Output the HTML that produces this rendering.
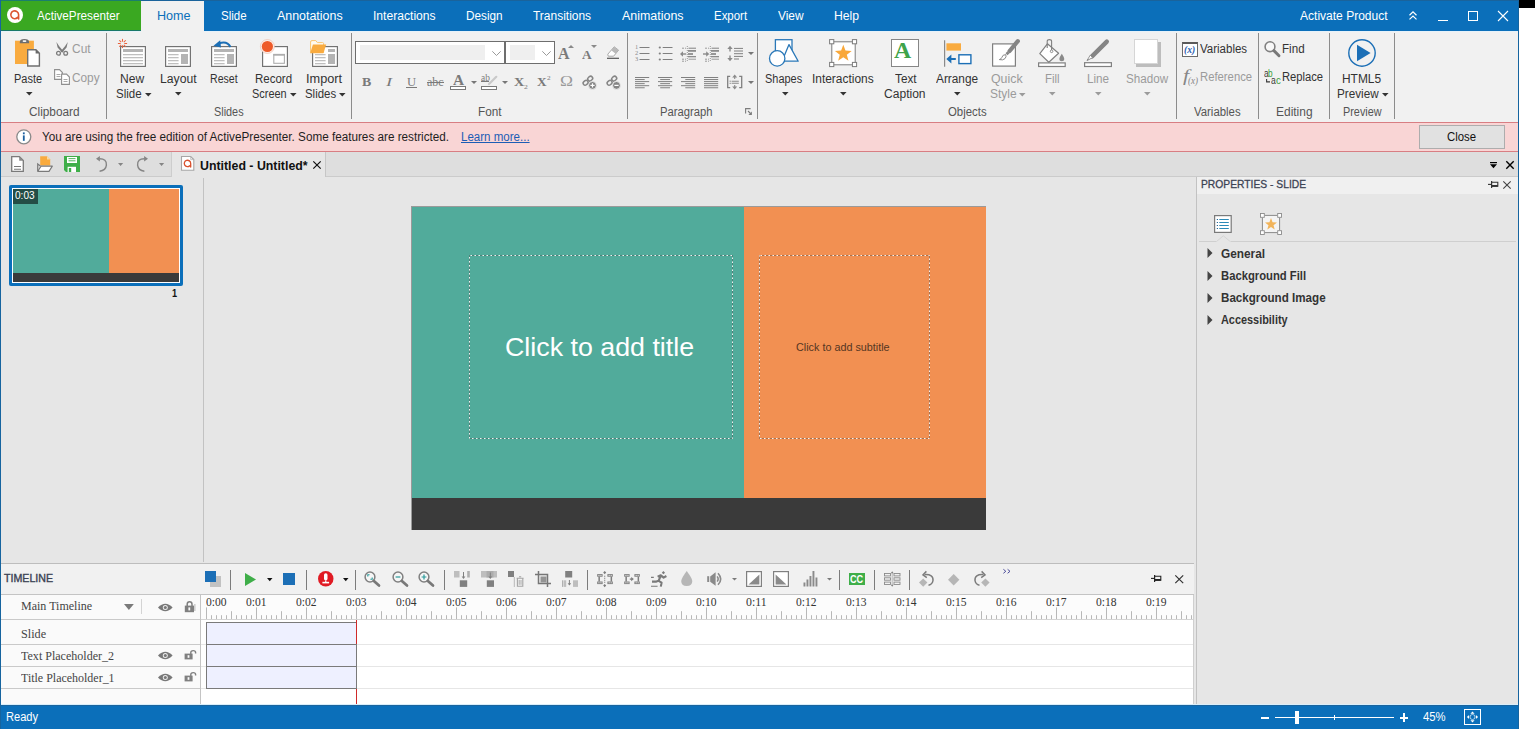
<!DOCTYPE html>
<html><head><meta charset="utf-8"><title>ActivePresenter</title><style>
*{margin:0;padding:0;box-sizing:border-box}
html,body{width:1535px;height:729px;overflow:hidden;background:#fff}
body{font-family:"Liberation Sans",sans-serif;font-size:12px;position:relative}
.r{position:absolute}
.i{position:absolute;overflow:visible}
.t{position:absolute;white-space:nowrap;line-height:1;transform-origin:0 0;display:inline-block}
.sf{font-family:"Liberation Serif",serif}
.b{font-weight:bold}
.it{font-style:italic}
</style></head><body>
<div class="r" style="left:1519px;top:0px;width:16px;height:7.7px;background:#000;"></div>
<div class="r" style="left:0px;top:0px;width:1519px;height:729px;background:#e6e6e6;"></div>
<div class="r" style="left:0px;top:0px;width:1519px;height:31px;background:#0b6fba;"></div>
<div class="r" style="left:1px;top:1px;width:140px;height:29px;background:#3aa821;"></div>
<div class="r" style="left:0px;top:0px;width:1519px;height:1px;background:#1a639b;"></div>
<div class="r" style="left:0px;top:0px;width:141px;height:1px;background:#1b7f6c;"></div>
<div class="r" style="left:1px;top:30px;width:140px;height:1px;background:#187868;"></div>
<div class="r" style="left:141px;top:1px;width:63px;height:30px;background:#f1f1f1;"></div>
<span class="t " style="font-size: 12px; color: rgb(255, 255, 255); left: 36.7px; top: 10px; transform: scaleX(0.9752);">ActivePresenter</span>
<span class="t " style="font-size: 12px; color: rgb(11, 111, 186); left: 156.7px; top: 10px; transform: scaleX(1.0495);">Home</span>
<span class="t " style="font-size: 12px; color: rgb(255, 255, 255); left: 220.7px; top: 10px; transform: scaleX(0.9593);">Slide</span>
<span class="t " style="font-size: 12px; color: rgb(255, 255, 255); left: 276.7px; top: 10px; transform: scaleX(1.0349);">Annotations</span>
<span class="t " style="font-size: 12px; color: rgb(255, 255, 255); left: 372.7px; top: 10px; transform: scaleX(1.0089);">Interactions</span>
<span class="t " style="font-size: 12px; color: rgb(255, 255, 255); left: 465.7px; top: 10px; transform: scaleX(0.9797);">Design</span>
<span class="t " style="font-size: 12px; color: rgb(255, 255, 255); left: 533.2px; top: 10px; transform: scaleX(0.9974);">Transitions</span>
<span class="t " style="font-size: 12px; color: rgb(255, 255, 255); left: 621.7px; top: 10px; transform: scaleX(1.0375);">Animations</span>
<span class="t " style="font-size: 12px; color: rgb(255, 255, 255); left: 714.2px; top: 10px; transform: scaleX(0.9542);">Export</span>
<span class="t " style="font-size: 12px; color: rgb(255, 255, 255); left: 777.7px; top: 10px; transform: scaleX(0.9924);">View</span>
<span class="t " style="font-size: 12px; color: rgb(255, 255, 255); left: 834.2px; top: 10px; transform: scaleX(1.0167);">Help</span>
<span class="t " style="font-size: 12px; color: rgb(255, 255, 255); left: 1300.2px; top: 10px; transform: scaleX(1.0026);">Activate Product</span>
<div class="r" style="left:1px;top:31px;width:1517px;height:91px;background:#f1f1f1;"></div>
<div class="r" style="left:1px;top:31px;width:140px;height:1px;background:#e6f2fa;"></div>
<div class="r" style="left:204px;top:31px;width:1313px;height:1px;background:#e6f2fa;"></div>
<div class="r" style="left:106px;top:33px;width:1px;height:86px;background:#8c8c8c;"></div>
<div class="r" style="left:351px;top:33px;width:1px;height:86px;background:#8c8c8c;"></div>
<div class="r" style="left:627px;top:33px;width:1px;height:86px;background:#8c8c8c;"></div>
<div class="r" style="left:757px;top:33px;width:1px;height:86px;background:#8c8c8c;"></div>
<div class="r" style="left:1176px;top:33px;width:1px;height:86px;background:#8c8c8c;"></div>
<div class="r" style="left:1258px;top:33px;width:1px;height:86px;background:#8c8c8c;"></div>
<div class="r" style="left:1329px;top:33px;width:1px;height:86px;background:#8c8c8c;"></div>
<div class="r" style="left:1394px;top:33px;width:1px;height:86px;background:#8c8c8c;"></div>
<span class="t " style="font-size: 12px; color: rgb(51, 51, 51); left: 14.2px; top: 73px; transform: scaleX(0.9157);">Paste</span>
<span class="t " style="font-size: 12px; color: rgb(51, 51, 51); left: 120.2px; top: 73px; transform: scaleX(1.0035);">New</span>
<span class="t " style="font-size: 12px; color: rgb(51, 51, 51); left: 115.7px; top: 88px; transform: scaleX(0.9593);">Slide</span>
<span class="t " style="font-size: 12px; color: rgb(51, 51, 51); left: 159.7px; top: 73px; transform: scaleX(1.0158);">Layout</span>
<span class="t " style="font-size: 12px; color: rgb(51, 51, 51); left: 210.2px; top: 73px; transform: scaleX(0.8801);">Reset</span>
<span class="t " style="font-size: 12px; color: rgb(51, 51, 51); left: 254.7px; top: 73px; transform: scaleX(0.959);">Record</span>
<span class="t " style="font-size: 12px; color: rgb(51, 51, 51); left: 251.7px; top: 88px; transform: scaleX(0.9098);">Screen</span>
<span class="t " style="font-size: 12px; color: rgb(51, 51, 51); left: 305.7px; top: 73px; transform: scaleX(1.0613);">Import</span>
<span class="t " style="font-size: 12px; color: rgb(51, 51, 51); left: 304.7px; top: 88px; transform: scaleX(0.9514);">Slides</span>
<span class="t " style="font-size: 12px; color: rgb(51, 51, 51); left: 765.2px; top: 73px; transform: scaleX(0.9115);">Shapes</span>
<span class="t " style="font-size: 12px; color: rgb(51, 51, 51); left: 812.2px; top: 73px; transform: scaleX(0.9928);">Interactions</span>
<span class="t " style="font-size: 12px; color: rgb(51, 51, 51); left: 894.7px; top: 73px; transform: scaleX(0.9811);">Text</span>
<span class="t " style="font-size: 12px; color: rgb(51, 51, 51); left: 884.2px; top: 88px; transform: scaleX(1.0054);">Caption</span>
<span class="t " style="font-size: 12px; color: rgb(51, 51, 51); left: 936.2px; top: 73px; transform: scaleX(0.9859);">Arrange</span>
<span class="t " style="font-size: 12px; color: rgb(155, 155, 155); left: 990.7px; top: 73px; transform: scaleX(1.0297);">Quick</span>
<span class="t " style="font-size: 12px; color: rgb(155, 155, 155); left: 990.2px; top: 88px; transform: scaleX(0.9967);">Style</span>
<span class="t " style="font-size: 12px; color: rgb(155, 155, 155); left: 1045.2px; top: 73px; transform: scaleX(0.9525);">Fill</span>
<span class="t " style="font-size: 12px; color: rgb(155, 155, 155); left: 1087.2px; top: 73px; transform: scaleX(0.9741);">Line</span>
<span class="t " style="font-size: 12px; color: rgb(155, 155, 155); left: 1126.2px; top: 73px; transform: scaleX(0.9706);">Shadow</span>
<span class="t " style="font-size: 12px; color: rgb(51, 51, 51); left: 1342.2px; top: 73px; transform: scaleX(0.9938);">HTML5</span>
<span class="t " style="font-size: 12px; color: rgb(51, 51, 51); left: 1337.2px; top: 88px; transform: scaleX(0.9745);">Preview</span>
<span class="t " style="font-size: 12px; color: rgb(155, 155, 155); left: 72.2px; top: 43px; transform: scaleX(0.9953);">Cut</span>
<span class="t " style="font-size: 12px; color: rgb(155, 155, 155); left: 72.2px; top: 71.5px; transform: scaleX(0.9852);">Copy</span>
<span class="t " style="font-size: 12px; color: rgb(51, 51, 51); left: 1200.2px; top: 43px; transform: scaleX(0.9585);">Variables</span>
<span class="t " style="font-size: 12px; color: rgb(155, 155, 155); left: 1200.2px; top: 71px; transform: scaleX(0.9409);">Reference</span>
<span class="t " style="font-size: 12px; color: rgb(51, 51, 51); left: 1282.2px; top: 43px; transform: scaleX(0.9681);">Find</span>
<span class="t " style="font-size: 12px; color: rgb(51, 51, 51); left: 1282.2px; top: 71px; transform: scaleX(0.9334);">Replace</span>
<span class="t " style="font-size: 12px; color: rgb(85, 85, 85); left: 29.2px; top: 106px; transform: scaleX(0.9849);">Clipboard</span>
<span class="t " style="font-size: 12px; color: rgb(85, 85, 85); left: 214.2px; top: 106px; transform: scaleX(0.9055);">Slides</span>
<span class="t " style="font-size: 12px; color: rgb(85, 85, 85); left: 478.2px; top: 106px; transform: scaleX(0.9827);">Font</span>
<span class="t " style="font-size: 12px; color: rgb(85, 85, 85); left: 660.2px; top: 106px; transform: scaleX(0.9385);">Paragraph</span>
<span class="t " style="font-size: 12px; color: rgb(85, 85, 85); left: 948.2px; top: 106px; transform: scaleX(0.9487);">Objects</span>
<span class="t " style="font-size: 12px; color: rgb(85, 85, 85); left: 1194.2px; top: 106px; transform: scaleX(0.9483);">Variables</span>
<span class="t " style="font-size: 12px; color: rgb(85, 85, 85); left: 1276.2px; top: 106px; transform: scaleX(0.9972);">Editing</span>
<span class="t " style="font-size: 12px; color: rgb(85, 85, 85); left: 1343.2px; top: 106px; transform: scaleX(0.9042);">Preview</span>
<svg class="i" style="left:25.7px;top:92.3px;" width="6.6" height="3.4" viewBox="0 0 6.6 3.4"><path d="M0 0H6.6L3.3 3.4Z" fill="#333333"></path></svg>
<svg class="i" style="left:144.7px;top:92.8px;" width="6.6" height="3.4" viewBox="0 0 6.6 3.4"><path d="M0 0H6.6L3.3 3.4Z" fill="#333333"></path></svg>
<svg class="i" style="left:175.2px;top:92.3px;" width="6.6" height="3.4" viewBox="0 0 6.6 3.4"><path d="M0 0H6.6L3.3 3.4Z" fill="#333333"></path></svg>
<svg class="i" style="left:290.2px;top:92.8px;" width="6.6" height="3.4" viewBox="0 0 6.6 3.4"><path d="M0 0H6.6L3.3 3.4Z" fill="#333333"></path></svg>
<svg class="i" style="left:338.7px;top:92.8px;" width="6.6" height="3.4" viewBox="0 0 6.6 3.4"><path d="M0 0H6.6L3.3 3.4Z" fill="#333333"></path></svg>
<svg class="i" style="left:781.7px;top:92.3px;" width="6.6" height="3.4" viewBox="0 0 6.6 3.4"><path d="M0 0H6.6L3.3 3.4Z" fill="#333333"></path></svg>
<svg class="i" style="left:840.2px;top:92.3px;" width="6.6" height="3.4" viewBox="0 0 6.6 3.4"><path d="M0 0H6.6L3.3 3.4Z" fill="#333333"></path></svg>
<svg class="i" style="left:954.2px;top:92.3px;" width="6.6" height="3.4" viewBox="0 0 6.6 3.4"><path d="M0 0H6.6L3.3 3.4Z" fill="#333333"></path></svg>
<svg class="i" style="left:1018.7px;top:92.8px;" width="6.6" height="3.4" viewBox="0 0 6.6 3.4"><path d="M0 0H6.6L3.3 3.4Z" fill="#9b9b9b"></path></svg>
<svg class="i" style="left:1049.2px;top:92.3px;" width="6.6" height="3.4" viewBox="0 0 6.6 3.4"><path d="M0 0H6.6L3.3 3.4Z" fill="#9b9b9b"></path></svg>
<svg class="i" style="left:1095.2px;top:92.3px;" width="6.6" height="3.4" viewBox="0 0 6.6 3.4"><path d="M0 0H6.6L3.3 3.4Z" fill="#9b9b9b"></path></svg>
<svg class="i" style="left:1144.2px;top:92.3px;" width="6.6" height="3.4" viewBox="0 0 6.6 3.4"><path d="M0 0H6.6L3.3 3.4Z" fill="#9b9b9b"></path></svg>
<svg class="i" style="left:1381.7px;top:92.8px;" width="6.6" height="3.4" viewBox="0 0 6.6 3.4"><path d="M0 0H6.6L3.3 3.4Z" fill="#333333"></path></svg>
<svg class="i" style="left:7px;top:7px;" width="16" height="16" viewBox="0 0 16 16"><circle cx="8" cy="8" r="8" fill="#fff"></circle><path d="M11.6 11.9V7.6A3.9 3.9 0 1 0 10.6 10.4" fill="none" stroke="#dc5530" stroke-width="1.6" stroke-linecap="round"></path></svg>
<svg class="i" style="left:15px;top:39px;" width="26" height="28" viewBox="0 0 26 28"><rect x="0" y="1.7" width="18.9" height="23.3" fill="#f9ab3f"></rect><path d="M4.8 4.3V3Q4.8 0.1 9.4 0.1Q14.1 0.1 14.1 3V4.3Z" fill="#6e6e6e"></path><rect x="7.7" y="1.3" width="3.6" height="1.7" rx="0.8" fill="#f4f4f4"></rect><path d="M12.7 10.7H20.9L24.4 14.2V27H12.7Z" fill="#fff" stroke="#707070" stroke-width="1.4"></path><path d="M20.6 10.2V14.6H25Z" fill="#6a6a6a"></path></svg>
<svg class="i" style="left:56px;top:42.3px;" width="12.2" height="13.8" viewBox="0 0 12.2 13.8"><path d="M0.4 0L3.2 4.2L7.6 9.4L6 10.4L1.6 5.4Z" fill="#7c7c7c"></path><path d="M11.8 0L9 4.2L4.6 9.4L6.2 10.4L10.6 5.4Z" fill="#7c7c7c"></path><circle cx="2.5" cy="11.3" r="1.9" fill="#f1f1f1" stroke="#7c7c7c" stroke-width="1.3"></circle><circle cx="9.7" cy="11.3" r="1.9" fill="#f1f1f1" stroke="#7c7c7c" stroke-width="1.3"></circle></svg>
<svg class="i" style="left:54px;top:69px;" width="16" height="16" viewBox="0 0 16 16"><path d="M0.6 0.6H5.5L8.4 3.5V10.4H0.6Z" fill="#fff" stroke="#8f8f8f" stroke-width="1.1"></path><path d="M2.5 5.5H6.5M2.5 7.5H6.5" stroke="#aaa" stroke-width="1"></path><path d="M7.6 5.1H12.5L15.4 8V15.4H7.6Z" fill="#fff" stroke="#8f8f8f" stroke-width="1.1"></path><path d="M9.5 10.5H13.5M9.5 12.5H13.5" stroke="#aaa" stroke-width="1"></path></svg>
<svg class="i" style="left:120px;top:46px;" width="26" height="21" viewBox="0 0 26 21"><rect x="0.6" y="0.6" width="24.8" height="19.8" fill="#fff" stroke="#707070" stroke-width="1.15"></rect><rect x="3" y="3" width="20" height="3" fill="#b4b4b4"></rect><path d="M3 8.7H23" stroke="#b4b4b4" stroke-width="1.1"></path><path d="M3 11.7H23" stroke="#b4b4b4" stroke-width="1.1"></path><path d="M3 14.7H23" stroke="#b4b4b4" stroke-width="1.1"></path><path d="M3 17.7H23" stroke="#b4b4b4" stroke-width="1.1"></path></svg>
<svg class="i" style="left:118px;top:39px;" width="9" height="9" viewBox="0 0 9 9"><g transform="translate(4.5 4.5)"><path d="M0 -1.8V-4.6" transform="rotate(0)" stroke="#e8613a" stroke-width="1"></path><path d="M0 -1.8V-4.6" transform="rotate(45)" stroke="#e8613a" stroke-width="1"></path><path d="M0 -1.8V-4.6" transform="rotate(90)" stroke="#e8613a" stroke-width="1"></path><path d="M0 -1.8V-4.6" transform="rotate(135)" stroke="#e8613a" stroke-width="1"></path><path d="M0 -1.8V-4.6" transform="rotate(180)" stroke="#e8613a" stroke-width="1"></path><path d="M0 -1.8V-4.6" transform="rotate(225)" stroke="#e8613a" stroke-width="1"></path><path d="M0 -1.8V-4.6" transform="rotate(270)" stroke="#e8613a" stroke-width="1"></path><path d="M0 -1.8V-4.6" transform="rotate(315)" stroke="#e8613a" stroke-width="1"></path></g></svg>
<svg class="i" style="left:165px;top:46px;" width="26" height="21" viewBox="0 0 26 21"><rect x="0.6" y="0.6" width="24.8" height="19.8" fill="#fff" stroke="#707070" stroke-width="1.15"></rect><rect x="3" y="3" width="20" height="3" fill="#b4b4b4"></rect><path d="M3 8.7H13.6" stroke="#b4b4b4" stroke-width="1.1"></path><path d="M3 11.7H13.6" stroke="#b4b4b4" stroke-width="1.1"></path><path d="M3 14.7H13.6" stroke="#b4b4b4" stroke-width="1.1"></path><path d="M3 17.7H13.6" stroke="#b4b4b4" stroke-width="1.1"></path><rect x="16" y="8" width="7" height="10" fill="#b4b4b4"></rect></svg>
<svg class="i" style="left:211px;top:46px;" width="26" height="21" viewBox="0 0 26 21"><rect x="0.6" y="0.6" width="24.8" height="19.8" fill="#fff" stroke="#707070" stroke-width="1.15"></rect><rect x="3" y="3" width="20" height="3" fill="#b4b4b4"></rect><path d="M3 8.7H13.6" stroke="#b4b4b4" stroke-width="1.1"></path><path d="M3 11.7H13.6" stroke="#b4b4b4" stroke-width="1.1"></path><path d="M3 14.7H13.6" stroke="#b4b4b4" stroke-width="1.1"></path><path d="M3 17.7H13.6" stroke="#b4b4b4" stroke-width="1.1"></path><rect x="16" y="8" width="7" height="10" fill="#b4b4b4"></rect></svg>
<svg class="i" style="left:213px;top:39px;" width="19" height="10" viewBox="0 0 19 10"><path d="M17.5 8Q14 1.5 6 4.5" fill="none" stroke="#1c6fb6" stroke-width="2"></path><path d="M0.5 6.8L7.2 1.2L8 8.6Z" fill="#1c6fb6"></path></svg>
<svg class="i" style="left:262px;top:46px;" width="26" height="21" viewBox="0 0 26 21"><rect x="0.6" y="0.6" width="24.8" height="19.8" fill="#fff" stroke="#707070" stroke-width="1.15"></rect><rect x="11.8" y="8.5" width="10.6" height="8.8" fill="#fff" stroke="#adadad" stroke-width="1.1"></rect><path d="M11.3 8.8H22.9" stroke="#adadad" stroke-width="1.8"></path></svg>
<svg class="i" style="left:260px;top:38.7px;" width="15" height="15" viewBox="0 0 15 15"><circle cx="7.4" cy="7.5" r="7" fill="#fdeee8" stroke="#eab8a6" stroke-width="0.6"></circle><circle cx="7.4" cy="7.5" r="5.6" fill="#ee5a28"></circle></svg>
<svg class="i" style="left:312px;top:46px;" width="26" height="21" viewBox="0 0 26 21"><rect x="0.6" y="0.6" width="24.8" height="19.8" fill="#fff" stroke="#707070" stroke-width="1.15"></rect><rect x="16" y="3" width="7" height="3" fill="#b4b4b4"></rect><path d="M3 8.7H13.6" stroke="#b4b4b4" stroke-width="1.1"></path><path d="M3 11.7H13.6" stroke="#b4b4b4" stroke-width="1.1"></path><path d="M3 14.7H13.6" stroke="#b4b4b4" stroke-width="1.1"></path><path d="M3 17.7H13.6" stroke="#b4b4b4" stroke-width="1.1"></path><rect x="16" y="8" width="7" height="10" fill="#b4b4b4"></rect></svg>
<svg class="i" style="left:310px;top:39.5px;" width="17" height="14" viewBox="0 0 17 14"><path d="M0.6 2Q0.6 0.6 2 0.6H5.8L7.4 2.6H12.6Q13.6 2.6 13.6 3.6V12.5H0.6Z" fill="#fffaf0" stroke="#fbc56e" stroke-width="1"></path><path d="M2.9 4.6H16.2L13.4 13.3H0.2Z" fill="#f9ab3f"></path></svg>
<div class="r" style="left:355px;top:41px;width:150px;height:23px;background:#fff;border:1px solid #6e6e6e"></div>
<div class="r" style="left:505px;top:41px;width:50px;height:23px;background:#fff;border:1px solid #6e6e6e;border-left:none"></div>
<div class="r" style="left:504px;top:41px;width:1.6px;height:23px;background:#6e6e6e;"></div>
<div class="r" style="left:360px;top:45px;width:124.5px;height:15px;background:#efefef;"></div>
<div class="r" style="left:510px;top:45px;width:25px;height:15px;background:#efefef;"></div>
<svg class="i" style="left:491.5px;top:50.5px;" width="9" height="5" viewBox="0 0 9 5"><path d="M0.3 0.3L4.5 4.5L8.7 0.3" fill="none" stroke="#9a9a9a" stroke-width="1"></path></svg>
<svg class="i" style="left:541.5px;top:50.5px;" width="9" height="5" viewBox="0 0 9 5"><path d="M0.3 0.3L4.5 4.5L8.7 0.3" fill="none" stroke="#9a9a9a" stroke-width="1"></path></svg>
<span class="t sf b" style="font-size: 16px; color: rgb(122, 122, 122); left: 558.2px; top: 45.5px; transform: scaleX(1.0032);">A</span>
<svg class="i" style="left:568.3px;top:45px;" width="6" height="3" viewBox="0 0 6 3"><path d="M0 3H6L3 0Z" fill="#8a8a8a"></path></svg>
<span class="t sf b" style="font-size: 12.5px; color: rgb(122, 122, 122); left: 581.7px; top: 48.5px; transform: scaleX(1.063);">A</span>
<svg class="i" style="left:591.2px;top:45px;" width="6" height="3" viewBox="0 0 6 3"><path d="M0 0H6L3 3Z" fill="#8a8a8a"></path></svg>
<svg class="i" style="left:607px;top:46px;" width="12.5" height="13.5" viewBox="0 0 12.5 13.5"><path d="M7.2 0.8L11.6 4.2L6.6 10.2L1.2 10.2L0.8 8.2Z" fill="#fff" stroke="#a8a8a8" stroke-width="1"></path><path d="M7.2 0.8L11.6 4.2L8.6 7.8L4.3 4.3Z" fill="#b9b9b9"></path><path d="M0 12.3H12" stroke="#555" stroke-width="1.2"></path></svg>
<span class="t sf b" style="font-size: 13.5px; color: rgb(122, 122, 122); left: 361.5px; top: 74.75px; transform: scaleX(1.0315);">B</span>
<span class="t sf it" style="font-size: 13.5px; color: rgb(122, 122, 122); left: 386.2px; top: 74.75px; transform: scaleX(1.3556);">I</span>
<span class="t sf" style="font-size: 13.5px; color: rgb(122, 122, 122); left: 407.2px; top: 74.75px; transform: scaleX(0.9333);">U</span>
<div class="r" style="left:406px;top:87px;width:11px;height:1px;background:#7a7a7a;"></div>
<span class="t sf" style="font-size: 13.5px; color: rgb(122, 122, 122); left: 426.7px; top: 74.75px; transform: scaleX(0.8861);">abc</span>
<div class="r" style="left:426.5px;top:82px;width:17px;height:1px;background:#7a7a7a;"></div>
<span class="t sf b" style="font-size: 15.5px; color: rgb(122, 122, 122); left: 452.7px; top: 71.5px; transform: scaleX(0.9908);">A</span>
<div class="r" style="left:450px;top:86px;width:16px;height:4px;background:#fff;border:1px solid #7a7a7a"></div>
<svg class="i" style="left:470.6px;top:81.0px;" width="6" height="3" viewBox="0 0 6 3"><path d="M0 0H6L3.0 3Z" fill="#777"></path></svg>
<span class="t sf" style="font-size: 9.5px; color: rgb(122, 122, 122); left: 480.7px; top: 74px; transform: scaleX(0.9812);">ab</span>
<div class="r" style="left:481px;top:81.3px;width:8.2px;height:0.8px;background:#7a7a7a;"></div>
<svg class="i" style="left:488px;top:76px;" width="9" height="9" viewBox="0 0 9 9"><path d="M1 8L8.3 0.8" stroke="#c9c9c9" stroke-width="2.2" stroke-linecap="round"></path></svg>
<div class="r" style="left:481px;top:86px;width:16px;height:4px;background:#fff;border:1px solid #7a7a7a"></div>
<svg class="i" style="left:501.9px;top:81.0px;" width="6" height="3" viewBox="0 0 6 3"><path d="M0 0H6L3.0 3Z" fill="#777"></path></svg>
<span class="t sf b" style="font-size: 13.5px; color: rgb(122, 122, 122); left: 513.7px; top: 74.75px; transform: scaleX(1.0564);">X</span>
<span class="t sf" style="font-size: 6.5px; color: rgb(122, 122, 122); left: 523.5px; top: 83.75px; transform: scaleX(1.1692);">2</span>
<span class="t sf b" style="font-size: 13.5px; color: rgb(122, 122, 122); left: 536.7px; top: 74.75px; transform: scaleX(0.9846);">X</span>
<span class="t sf" style="font-size: 6.5px; color: rgb(122, 122, 122); left: 547px; top: 74.75px; transform: scaleX(1.1077);">2</span>
<span class="t sf" style="font-size: 14.5px; color: rgb(153, 153, 153); left: 559.5px; top: 73.75px; transform: scaleX(1.2058);">Ω</span>
<svg class="i" style="left:582px;top:75px;" width="15" height="15" viewBox="0 0 15 15"><g fill="none" stroke="#858585" stroke-width="1.5"><rect x="-2.6" y="-2" width="5.2" height="4" rx="2" transform="translate(3.6 7.8) rotate(-40)"></rect><rect x="-2.6" y="-2" width="5.2" height="4" rx="2" transform="translate(8.2 3.6) rotate(-40)"></rect></g><circle cx="10.5" cy="10.4" r="3.9" fill="#858585" stroke="#f1f1f1" stroke-width="0.8"></circle><path d="M8.4 10.4H12.6" stroke="#fff" stroke-width="1.2"></path><path d="M10.5 8.3V12.5" stroke="#fff" stroke-width="1.2"></path></svg>
<svg class="i" style="left:606px;top:75px;" width="15" height="15" viewBox="0 0 15 15"><g fill="none" stroke="#858585" stroke-width="1.5"><rect x="-2.6" y="-2" width="5.2" height="4" rx="2" transform="translate(3.6 7.8) rotate(-40)"></rect><rect x="-2.6" y="-2" width="5.2" height="4" rx="2" transform="translate(8.2 3.6) rotate(-40)"></rect></g><circle cx="10.5" cy="10.4" r="3.9" fill="#858585" stroke="#f1f1f1" stroke-width="0.8"></circle><path d="M8.4 10.4H12.6" stroke="#fff" stroke-width="1.2"></path></svg>
<svg class="i" style="left:634.5px;top:45px;" width="15" height="17" viewBox="0 0 15 17"><path d="M4.5 2.5H14.5" stroke="#808080" stroke-width="1"></path><path d="M4.5 8.5H14.5" stroke="#808080" stroke-width="1"></path><path d="M4.5 14.5H14.5" stroke="#808080" stroke-width="1"></path></svg>
<span class="t sf" style="font-size: 6.5px; color: rgb(138, 138, 138); left: 634.5px; top: 44.3px; transform: scaleX(0.9846);">1</span>
<span class="t sf" style="font-size: 6.5px; color: rgb(138, 138, 138); left: 634.5px; top: 50.3px; transform: scaleX(0.9846);">2</span>
<span class="t sf" style="font-size: 6.5px; color: rgb(138, 138, 138); left: 634.5px; top: 56.3px; transform: scaleX(0.9846);">3</span>
<svg class="i" style="left:657.5px;top:45px;" width="15" height="17" viewBox="0 0 15 17"><path d="M4.7 2.5H14.5" stroke="#808080" stroke-width="1"></path><circle cx="1.8" cy="2.5" r="1.1" fill="#808080"></circle><path d="M4.7 8.5H14.5" stroke="#808080" stroke-width="1"></path><circle cx="1.8" cy="8.5" r="1.1" fill="#808080"></circle><path d="M4.7 14.5H14.5" stroke="#808080" stroke-width="1"></path><circle cx="1.8" cy="14.5" r="1.1" fill="#808080"></circle></svg>
<svg class="i" style="left:680px;top:45px;" width="16" height="18" viewBox="0 0 16 18"><path d="M2 3.2H6M2 14.2H6M2 16.2H6" stroke="#9a9a9a" stroke-width="1" stroke-dasharray="2 1"></path><path d="M7.3 1V17" stroke="#9a9a9a" stroke-width="1" stroke-dasharray="1 1"></path><path d="M8.5 3.2H16" stroke="#808080" stroke-width="1"></path><path d="M8 5.9H16" stroke="#808080" stroke-width="1.6"></path><path d="M8 9H13" stroke="#808080" stroke-width="1.6"></path><path d="M8 11.7H16" stroke="#808080" stroke-width="1.2"></path><path d="M8.5 14.2H16" stroke="#9a9a9a" stroke-width="1"></path><path d="M2.5 9H6.2" stroke="#8a8a8a" stroke-width="1.4"></path><path d="M3 6.3L0 9L3 11.7Z" fill="#8a8a8a"></path></svg>
<svg class="i" style="left:703px;top:45px;" width="16" height="18" viewBox="0 0 16 18"><path d="M2 3.2H6M2 14.2H6M2 16.2H6" stroke="#9a9a9a" stroke-width="1" stroke-dasharray="2 1"></path><path d="M7.3 1V17" stroke="#9a9a9a" stroke-width="1" stroke-dasharray="1 1"></path><path d="M8.5 3.2H16" stroke="#808080" stroke-width="1"></path><path d="M8 5.9H16" stroke="#808080" stroke-width="1.6"></path><path d="M8 9H13" stroke="#808080" stroke-width="1.6"></path><path d="M8 11.7H16" stroke="#808080" stroke-width="1.2"></path><path d="M8.5 14.2H16" stroke="#9a9a9a" stroke-width="1"></path><path d="M0 9H4" stroke="#8a8a8a" stroke-width="1.4"></path><path d="M3.2 6.3L6.2 9L3.2 11.7Z" fill="#8a8a8a"></path></svg>
<svg class="i" style="left:727px;top:45px;" width="16" height="17" viewBox="0 0 16 17"><path d="M7 3.4H16" stroke="#808080" stroke-width="1"></path><path d="M7 6H16" stroke="#808080" stroke-width="1"></path><path d="M7 8.7H16" stroke="#808080" stroke-width="1"></path><path d="M7 11.4H16" stroke="#808080" stroke-width="1"></path><path d="M7 14H12" stroke="#808080" stroke-width="1"></path><path d="M3 3V6.5M3 10.5V14" stroke="#8a8a8a" stroke-width="1.4"></path><path d="M0.3 4L3 0.8L5.7 4ZM0.3 13L3 16.2L5.7 13Z" fill="#8a8a8a"></path></svg>
<svg class="i" style="left:748.0px;top:52.0px;" width="6" height="3" viewBox="0 0 6 3"><path d="M0 0H6L3.0 3Z" fill="#777"></path></svg>
<svg class="i" style="left:634.8px;top:76.8px;" width="15" height="12" viewBox="0 0 15 12"><path d="M0 0.5H14.2" stroke="#808080" stroke-width="1"></path><path d="M0 2.55H9.7" stroke="#808080" stroke-width="1"></path><path d="M0 4.6H14.2" stroke="#808080" stroke-width="1"></path><path d="M0 6.6499999999999995H9.7" stroke="#808080" stroke-width="1"></path><path d="M0 8.7H14.2" stroke="#808080" stroke-width="1"></path><path d="M0 10.75H9.7" stroke="#808080" stroke-width="1"></path></svg>
<svg class="i" style="left:657.8px;top:76.8px;" width="15" height="12" viewBox="0 0 15 12"><path d="M0 0.5H14.2" stroke="#808080" stroke-width="1"></path><path d="M2.2 2.55H12" stroke="#808080" stroke-width="1"></path><path d="M0 4.6H14.2" stroke="#808080" stroke-width="1"></path><path d="M2.2 6.6499999999999995H12" stroke="#808080" stroke-width="1"></path><path d="M0 8.7H14.2" stroke="#808080" stroke-width="1"></path><path d="M2.2 10.75H12" stroke="#808080" stroke-width="1"></path></svg>
<svg class="i" style="left:681px;top:76.8px;" width="15" height="12" viewBox="0 0 15 12"><path d="M0 0.5H14.2" stroke="#808080" stroke-width="1"></path><path d="M4.3 2.55H14.2" stroke="#808080" stroke-width="1"></path><path d="M0 4.6H14.2" stroke="#808080" stroke-width="1"></path><path d="M4.3 6.6499999999999995H14.2" stroke="#808080" stroke-width="1"></path><path d="M0 8.7H14.2" stroke="#808080" stroke-width="1"></path><path d="M4.3 10.75H14.2" stroke="#808080" stroke-width="1"></path></svg>
<svg class="i" style="left:704px;top:76.8px;" width="15" height="12" viewBox="0 0 15 12"><path d="M0 0.5H14.2" stroke="#808080" stroke-width="1"></path><path d="M0 2.55H14.2" stroke="#808080" stroke-width="1"></path><path d="M0 4.6H14.2" stroke="#808080" stroke-width="1"></path><path d="M0 6.6499999999999995H14.2" stroke="#808080" stroke-width="1"></path><path d="M0 8.7H14.2" stroke="#808080" stroke-width="1"></path><path d="M0 10.75H14.2" stroke="#808080" stroke-width="1"></path></svg>
<svg class="i" style="left:726.6px;top:74.4px;" width="16" height="16" viewBox="0 0 16 16"><path d="M3.2 2.3H0.7V13.6H3.2M12.2 2.3H14.7V13.6H12.2" fill="none" stroke="#808080" stroke-width="1.3"></path><path d="M2.6 7.2H3.8M2.6 9.3H3.8" stroke="#808080" stroke-width="1"></path><path d="M4.6 7.2H11.8M4.6 9.3H11.8" stroke="#8a8a8a" stroke-width="1.1"></path><path d="M5.2 3.4L7.7 0.6L10.2 3.4ZM5.2 12.6L7.7 15.4L10.2 12.6Z" fill="#8a8a8a"></path><path d="M7.7 2V5M7.7 11V14" stroke="#8a8a8a" stroke-width="1.1"></path></svg>
<svg class="i" style="left:748.0px;top:80.9px;" width="6" height="3" viewBox="0 0 6 3"><path d="M0 0H6L3.0 3Z" fill="#777"></path></svg>
<svg class="i" style="left:745px;top:108.2px;" width="7" height="7" viewBox="0 0 7 7"><path d="M0.6 5.6V0.6H5.6" fill="none" stroke="#7c7c7c" stroke-width="1.1"></path><path d="M3 3L6 6" stroke="#7c7c7c" stroke-width="1.1"></path><path d="M6.9 3.4V6.9H3.4Z" fill="#7c7c7c"></path></svg>
<svg class="i" style="left:769px;top:39px;" width="30" height="28" viewBox="0 0 30 28"><rect x="6.4" y="0.7" width="16.6" height="17" fill="#fff" stroke="#2a78b8" stroke-width="1.3"></rect><path d="M20 5.6L29.2 22.2H13Z" fill="#fff" stroke="#2a78b8" stroke-width="1.3" stroke-linejoin="round"></path><circle cx="8.2" cy="19.4" r="7.7" fill="#fff" stroke="#2a78b8" stroke-width="1.3"></circle></svg>
<svg class="i" style="left:828.7px;top:39px;" width="29" height="29" viewBox="0 0 29 29"><rect x="2.8" y="2.8" width="23.4" height="23" fill="#fff" stroke="#7c7c7c" stroke-width="1"></rect><rect x="0.6" y="0.6" width="4.2" height="4.2" fill="#fff" stroke="#7c7c7c" stroke-width="1"></rect><rect x="23.4" y="0.6" width="4.2" height="4.2" fill="#fff" stroke="#7c7c7c" stroke-width="1"></rect><rect x="0.6" y="23.4" width="4.2" height="4.2" fill="#fff" stroke="#7c7c7c" stroke-width="1"></rect><rect x="23.4" y="23.4" width="4.2" height="4.2" fill="#fff" stroke="#7c7c7c" stroke-width="1"></rect><polygon points="14.30,5.80 16.47,11.61 22.67,11.88 17.82,15.74 19.47,21.72 14.30,18.30 9.13,21.72 10.78,15.74 5.93,11.88 12.13,11.61" fill="#f9a83a"></polygon></svg>
<div class="r" style="left:891px;top:39px;width:28px;height:27.7px;background:#fff;border:1.2px solid #868686"></div>
<span class="t sf b" style="font-size: 22.5px; color: rgb(63, 163, 74); left: 893.9px; top: 39.7px; transform: scaleX(1.0585);">A</span>
<svg class="i" style="left:944px;top:39px;" width="28" height="28" viewBox="0 0 28 28"><path d="M0.6 1.2V27.8" stroke="#8a8a8a" stroke-width="1.2"></path><rect x="2.4" y="4.3" width="14.6" height="7.3" fill="#f9ab3f"></rect><rect x="14.9" y="15.8" width="12" height="8.8" fill="#fff" stroke="#1c6fb6" stroke-width="1.4"></rect><path d="M5.5 20H11.8" stroke="#1c6fb6" stroke-width="2"></path><path d="M2.3 20L7.4 15.6V24.4Z" fill="#1c6fb6"></path></svg>
<svg class="i" style="left:992px;top:39px;" width="29" height="28" viewBox="0 0 29 28"><rect x="0.6" y="4.9" width="22.8" height="22.2" fill="#fff" stroke="#808080" stroke-width="1.2"></rect><path d="M25.8 2.2L17.6 12" stroke="#858585" stroke-width="4.2" stroke-linecap="round"></path><path d="M16.4 13.2L14.6 15.2" stroke="#858585" stroke-width="2.8"></path><path d="M13.8 15.6Q10.5 15.5 9.8 18.5Q9.3 20 7.3 20.6Q11 21.6 13 19.6Q14.6 17.9 13.8 15.6Z" fill="#fff" stroke="#8a8a8a" stroke-width="1"></path></svg>
<svg class="i" style="left:1038px;top:39px;" width="28" height="28" viewBox="0 0 28 28"><rect x="0.6" y="23.9" width="26.6" height="3.6" fill="#fff" stroke="#808080" stroke-width="1.2"></rect><path d="M9.4 4.8L20.6 14.2L10.8 23.3L1.8 14.6Z" fill="#fff" stroke="#808080" stroke-width="1.2" stroke-linejoin="round"></path><path d="M9.2 9V2.2Q9.2 0.6 11.4 0.6Q13.6 0.6 13.6 2.2V11" fill="none" stroke="#808080" stroke-width="1.1"></path><circle cx="13.6" cy="12.3" r="1.3" fill="#fff" stroke="#808080" stroke-width="0.9"></circle><path d="M23.8 14.8Q26.3 18.5 26.3 20Q26.3 22.2 23.8 22.2Q21.3 22.2 21.3 20Q21.3 18.5 23.8 14.8Z" fill="#8a8a8a"></path></svg>
<svg class="i" style="left:1084px;top:39px;" width="28" height="28" viewBox="0 0 28 28"><rect x="0.6" y="23.7" width="26.8" height="3.8" fill="#fff" stroke="#808080" stroke-width="1.2"></rect><path d="M22.8 2.6L8 17.4" stroke="#858585" stroke-width="4.4" stroke-linecap="round"></path><path d="M6.2 16.2L3 21.6L8.6 18.6Z" fill="#fff" stroke="#8a8a8a" stroke-width="0.9"></path><path d="M3 21.6L4.6 20.8L3.9 20Z" fill="#777"></path></svg>
<div class="r" style="left:1136.3px;top:41.8px;width:24.7px;height:25px;background:#bdbdbd;"></div>
<div class="r" style="left:1133.5px;top:39px;width:24.2px;height:24.7px;background:#fff;border:1px solid #d6d6d6"></div>
<div class="r" style="left:1182px;top:42.2px;width:15.8px;height:14.6px;background:#fff;border:1px solid #6a6a6a;border-top:2.6px solid #5a5a5a"></div>
<span class="t sf b it" style="font-size: 10.5px; color: rgb(42, 93, 176); left: 1184.3px; top: 45.2px; transform: scaleX(0.9143);">(x)</span>
<span class="t sf it" style="font-size: 16px; color: rgb(134, 134, 134); left: 1183.2px; top: 68.2px; transform: scaleX(1.3698);">f</span>
<span class="t sf it" style="font-size: 9.5px; color: rgb(134, 134, 134); left: 1188.3px; top: 76.6px; transform: scaleX(0.9481);">(x)</span>
<svg class="i" style="left:1263.6px;top:41px;" width="16.5" height="16.5" viewBox="0 0 16.5 16.5"><circle cx="6" cy="5.7" r="4.9" fill="#f8f8f8" stroke="#808080" stroke-width="1.6"></circle><path d="M9.9 9.6L15 14.7" stroke="#787878" stroke-width="2.9" stroke-linecap="round"></path></svg>
<span class="t " style="font-size: 10px; color: rgb(58, 58, 58); left: 1263.9px; top: 68.8px; transform: scaleX(0.827);">a</span>
<span class="t " style="font-size: 10px; color: rgb(58, 159, 58); left: 1268.3px; top: 68.8px; transform: scaleX(0.827);">b</span>
<span class="t " style="font-size: 10px; color: rgb(58, 58, 58); left: 1270.9px; top: 75.7px; transform: scaleX(0.8629);">a</span>
<span class="t " style="font-size: 10px; color: rgb(58, 159, 58); left: 1275.7px; top: 75.7px; transform: scaleX(0.96);">c</span>
<svg class="i" style="left:1266.3px;top:78.6px;" width="4.5" height="3.6" viewBox="0 0 4.5 3.6"><path d="M0.6 0V2.9H4" fill="none" stroke="#3a3a3a" stroke-width="1.1"></path></svg>
<svg class="i" style="left:1348px;top:38.8px;" width="28" height="28" viewBox="0 0 28 28"><circle cx="14" cy="14" r="13.2" fill="none" stroke="#1c6fb6" stroke-width="1.4"></circle><path d="M9 5.8L22.6 14L9 22.2Z" fill="#1c6fb6"></path></svg>
<svg class="i" style="left:1409px;top:11px;" width="8" height="9" viewBox="0 0 8 9"><path d="M0.5 4.2L4 0.8L7.5 4.2M0.5 8.4L4 5L7.5 8.4" fill="none" stroke="#fff" stroke-width="1.2"></path></svg>
<div class="r" style="left:1438px;top:20px;width:10px;height:1px;background:#fff;"></div>
<div class="r" style="left:1468px;top:11px;width:10px;height:10px;background:transparent;border:1px solid #fff"></div>
<svg class="i" style="left:1498px;top:11px;" width="10" height="10" viewBox="0 0 10 10"><path d="M0 0L10 10M10 0L0 10" stroke="#fff" stroke-width="1.1"></path></svg>
<div class="r" style="left:1px;top:122px;width:1517px;height:30px;background:#f9d5d5;border-top:1px solid #d87e83;border-bottom:1px solid #d87e83"></div>
<span class="t " style="font-size: 12px; color: rgb(30, 30, 30); left: 42.2px; top: 130.5px; transform: scaleX(0.9759);">You are using the free edition of ActivePresenter. Some features are restricted.</span>
<span class="t " style="font-size: 12px; color: rgb(28, 93, 181); text-decoration: underline; left: 461.2px; top: 130.5px; transform: scaleX(0.9611);">Learn more...</span>
<div class="r" style="left:1419px;top:125px;width:86px;height:24px;background:#e1e1e1;border:1px solid #adadad"></div>
<span class="t " style="font-size: 12px; color: rgb(17, 17, 17); left: 1447.2px; top: 131px; transform: scaleX(0.9483);">Close</span>
<div class="r" style="left:1px;top:152px;width:1517px;height:25px;background:#dedede;"></div>
<div class="r" style="left:1px;top:176px;width:1517px;height:1px;background:#cbcbcb;"></div>
<div class="r" style="left:171px;top:152px;width:154.5px;height:25px;background:#e6e6e6;border-right:1px solid #c6c6c6;border-left:1px solid #cdcdcd"></div>
<span class="t b" style="font-size: 12px; color: rgb(17, 17, 17); left: 200.2px; top: 159.5px; transform: scaleX(1.0281);">Untitled - Untitled*</span>
<svg class="i" style="left:16px;top:129px;" width="16" height="16" viewBox="0 0 16 16"><circle cx="7.8" cy="7.8" r="7" fill="#fff" stroke="#8a8a8a" stroke-width="1.3"></circle><rect x="6.9" y="6.4" width="1.8" height="5.4" fill="#1c5f9f"></rect><rect x="6.9" y="3.4" width="1.8" height="1.9" fill="#1c5f9f"></rect></svg>
<svg class="i" style="left:11px;top:156px;" width="13" height="16" viewBox="0 0 13 16"><path d="M0.7 0.7H8.4L12.3 4.6V15.3H0.7Z" fill="#fff" stroke="#7a7a7a" stroke-width="1.3"></path><path d="M8.2 0.5V4.8H12.5Z" fill="#8a8a8a"></path><path d="M3 10.5H10M3 13.3H10" stroke="#7a7a7a" stroke-width="1.1"></path></svg>
<svg class="i" style="left:37px;top:156px;" width="16" height="16" viewBox="0 0 16 16"><path d="M3.2 0.3H10L13.2 3.5V9.5H3.2Z" fill="#f9ab3f"></path><path d="M10 0.3V3.5H13.2Z" fill="#fcd9a0"></path><path d="M0.7 15.3V8L3.4 10" fill="none" stroke="#7a7a7a" stroke-width="1.2"></path><path d="M4 10.2H15.3L12 15.3H0.8Z" fill="#fff" stroke="#7a7a7a" stroke-width="1.2" stroke-linejoin="round"></path></svg>
<svg class="i" style="left:64px;top:156px;" width="16" height="16" viewBox="0 0 16 16"><path d="M0 0H16V16H2L0 14Z" fill="#3fae49"></path><rect x="3" y="1" width="10" height="6" fill="#fff"></rect><path d="M4.5 2.6H11.5M4.5 4.8H11.5" stroke="#3fae49" stroke-width="0.9"></path><rect x="3.6" y="10.8" width="8.4" height="5.2" fill="#fff"></rect><rect x="4.8" y="12" width="2.4" height="4" fill="#3fae49"></rect></svg>
<svg class="i" style="left:96px;top:156px;" width="12" height="16" viewBox="0 0 12 16"><path d="M3.3 2.7Q10.9 2.5 10.4 9.2Q9.8 14.6 3.6 15.2" fill="none" stroke="#858585" stroke-width="1.4"></path><path d="M0 2.7L3.9 0V5.4Z" fill="#858585"></path></svg>
<svg class="i" style="left:117.9px;top:163.1px;" width="5.2" height="3" viewBox="0 0 5.2 3"><path d="M0 0H5.2L2.6 3Z" fill="#858585"></path></svg>
<svg class="i" style="left:136px;top:156px;" width="12" height="16" viewBox="0 0 12 16"><path d="M8.7 2.7Q1.1 2.5 1.6 9.2Q2.2 14.6 8.4 15.2" fill="none" stroke="#858585" stroke-width="1.4"></path><path d="M12 2.7L8.1 0V5.4Z" fill="#858585"></path></svg>
<svg class="i" style="left:158.9px;top:163.1px;" width="5.2" height="3" viewBox="0 0 5.2 3"><path d="M0 0H5.2L2.6 3Z" fill="#858585"></path></svg>
<svg class="i" style="left:181px;top:156px;" width="13.5" height="15" viewBox="0 0 13.5 15"><path d="M0.5 0.5H9.7L12.8 3.6V14.3H0.5Z" fill="#fff" stroke="#a6a6a6" stroke-width="1.1"></path><path d="M9.7 0.5V3.6H12.8" fill="none" stroke="#b8b8b8" stroke-width="0.8"></path><path d="M9.7 11V7.4A3.2 3.2 0 1 0 8.8 9.7" fill="none" stroke="#d9502d" stroke-width="1.3" stroke-linecap="round"></path></svg>
<svg class="i" style="left:313.3px;top:161px;" width="8" height="8" viewBox="0 0 8 8"><path d="M0.3 0.3L7.7 7.7M7.7 0.3L0.3 7.7" stroke="#111" stroke-width="1.2"></path></svg>
<svg class="i" style="left:1490px;top:162px;" width="7" height="6.2" viewBox="0 0 7 6.2"><rect x="0" y="0" width="7" height="1.2" fill="#000"></rect><path d="M0 2.2H7L3.5 6.2Z" fill="#000"></path></svg>
<svg class="i" style="left:1506px;top:161px;" width="8" height="8" viewBox="0 0 8 8"><path d="M0.3 0.3L7.7 7.7M7.7 0.3L0.3 7.7" stroke="#000" stroke-width="1.4"></path></svg>
<div class="r" style="left:203px;top:178px;width:1px;height:384px;background:#c2c2c2;"></div>
<div class="r" style="left:9px;top:185px;width:174px;height:101px;background:#0b6fba;border-radius:2px"></div>
<div class="r" style="left:12px;top:188px;width:168px;height:95px;background:#fff;"></div>
<div class="r" style="left:13px;top:189px;width:96px;height:84px;background:#51ab9b;"></div>
<div class="r" style="left:109px;top:189px;width:70px;height:84px;background:#f29052;"></div>
<div class="r" style="left:13px;top:273px;width:166px;height:9px;background:#3a3a3a;"></div>
<div class="r" style="left:13px;top:189px;width:25px;height:15px;background:rgba(0,0,0,0.55);"></div>
<span class="t " style="font-size: 10.5px; color: rgb(255, 255, 255); left: 14.7px; top: 189.5px; transform: scaleX(0.959);">0:03</span>
<span class="t b" style="font-size: 11px; color: rgb(17, 17, 17); left: 172.2px; top: 288px; transform: scaleX(0.8327);">1</span>
<div class="r" style="left:411px;top:206px;width:575px;height:324px;background:#9a9a9a;"></div>
<div class="r" style="left:411.5px;top:206.5px;width:332.5px;height:291.5px;background:#51ab9b;"></div>
<div class="r" style="left:744px;top:206.5px;width:241.5px;height:291.5px;background:#f29052;"></div>
<div class="r" style="left:411.5px;top:498px;width:574px;height:31.5px;background:#3a3a3a;"></div>
<svg class="i" style="left:469px;top:255px;" width="264" height="184" viewBox="0 0 264 184"><rect x="0.5" y="0.5" width="263" height="183" fill="none" stroke="#4a4a4a" stroke-width="1" opacity="0.42"></rect><rect x="0.5" y="0.5" width="263" height="183" fill="none" stroke="#fff" stroke-width="1" stroke-dasharray="1.4 2.6" stroke-dashoffset="-1"></rect></svg>
<svg class="i" style="left:759px;top:255px;" width="171" height="184" viewBox="0 0 171 184"><rect x="0.5" y="0.5" width="170" height="183" fill="none" stroke="#4a4a4a" stroke-width="1" opacity="0.42"></rect><rect x="0.5" y="0.5" width="170" height="183" fill="none" stroke="#fff" stroke-width="1" stroke-dasharray="1.4 2.6" stroke-dashoffset="-1"></rect></svg>
<span class="t " style="font-size: 26.5px; color: rgb(255, 255, 255); left: 505.2px; top: 334px; transform: scaleX(1.0109);">Click to add title</span>
<span class="t " style="font-size: 11px; color: rgb(85, 54, 34); left: 796.2px; top: 341.75px; transform: scaleX(0.9812);">Click to add subtitle</span>
<div class="r" style="left:1196px;top:177px;width:1px;height:528px;background:#c2c2c2;"></div>
<div class="r" style="left:1197px;top:177px;width:321px;height:17px;background:#f0f0f0;"></div>
<span class="t " style="font-size: 11.3px; color: rgb(60, 67, 84); -webkit-text-stroke: 0.3px rgb(60, 67, 84); left: 1201.2px; top: 179px; transform: scaleX(0.9114);">PROPERTIES - SLIDE</span>
<div class="r" style="left:1199px;top:241px;width:317px;height:1px;background:#cfcfcf;"></div>
<span class="t b" style="font-size: 12px; color: rgb(51, 51, 51); left: 1221.2px; top: 247.5px; transform: scaleX(0.9865);">General</span>
<svg class="i" style="left:1207px;top:248.0px;" width="6" height="10" viewBox="0 0 6 10"><path d="M0.5 0L5.5 5L0.5 10Z" fill="#444"></path></svg>
<span class="t b" style="font-size: 12px; color: rgb(51, 51, 51); left: 1221.2px; top: 270px; transform: scaleX(0.9384);">Background Fill</span>
<svg class="i" style="left:1207px;top:270.5px;" width="6" height="10" viewBox="0 0 6 10"><path d="M0.5 0L5.5 5L0.5 10Z" fill="#444"></path></svg>
<span class="t b" style="font-size: 12px; color: rgb(51, 51, 51); left: 1221.2px; top: 292px; transform: scaleX(0.9682);">Background Image</span>
<svg class="i" style="left:1207px;top:292.5px;" width="6" height="10" viewBox="0 0 6 10"><path d="M0.5 0L5.5 5L0.5 10Z" fill="#444"></path></svg>
<span class="t b" style="font-size: 12px; color: rgb(51, 51, 51); left: 1221.2px; top: 314px; transform: scaleX(0.9077);">Accessibility</span>
<svg class="i" style="left:1207px;top:314.5px;" width="6" height="10" viewBox="0 0 6 10"><path d="M0.5 0L5.5 5L0.5 10Z" fill="#444"></path></svg>
<svg class="i" style="left:1488px;top:181.2px;" width="10.5" height="7" viewBox="0 0 10.5 7"><path d="M0 3.4H3.4" stroke="#333" stroke-width="1.1"></path><path d="M3.6 0V7" stroke="#333" stroke-width="1.2"></path><path d="M4 1.2H9.8V5.2H4" fill="none" stroke="#333" stroke-width="1.1"></path><path d="M4 4.9H9.8" stroke="#333" stroke-width="1.8"></path></svg>
<svg class="i" style="left:1503px;top:181px;" width="8" height="8" viewBox="0 0 8 8"><path d="M0.3 0.3L7.7 7.7M7.7 0.3L0.3 7.7" stroke="#444" stroke-width="1.1"></path></svg>
<svg class="i" style="left:1214px;top:215px;" width="18" height="18" viewBox="0 0 18 18"><rect x="0.6" y="0.6" width="16.6" height="16.8" fill="#fff" stroke="#7a7a7a" stroke-width="1.2"></rect><path d="M5.3 4.5H14.8" stroke="#2a8ab8" stroke-width="1"></path><rect x="2.8" y="4.0" width="1.2" height="1" fill="#2a6a9a"></rect><path d="M5.3 7.5H14.8" stroke="#2a8ab8" stroke-width="1"></path><rect x="2.8" y="7.0" width="1.2" height="1" fill="#2a6a9a"></rect><path d="M5.3 10.5H14.8" stroke="#2a8ab8" stroke-width="1"></path><rect x="2.8" y="10.0" width="1.2" height="1" fill="#2a6a9a"></rect><path d="M5.3 13.5H14.8" stroke="#2a8ab8" stroke-width="1"></path><rect x="2.8" y="13.0" width="1.2" height="1" fill="#2a6a9a"></rect></svg>
<svg class="i" style="left:1260px;top:213px;" width="22" height="22" viewBox="0 0 22 22"><rect x="2.4" y="2.4" width="17.2" height="17.2" fill="#f4f4f4"></rect><path d="M4.6 2.4H17.4M4.6 19.6H17.4M2.4 4.6V17.4M19.6 4.6V17.4" stroke="#8a8a8a" stroke-width="1"></path><rect x="0.5" y="0.5" width="3.8" height="3.8" fill="#fff" stroke="#8a8a8a" stroke-width="0.9"></rect><rect x="17.7" y="0.5" width="3.8" height="3.8" fill="#fff" stroke="#8a8a8a" stroke-width="0.9"></rect><rect x="0.5" y="17.7" width="3.8" height="3.8" fill="#fff" stroke="#8a8a8a" stroke-width="0.9"></rect><rect x="17.7" y="17.7" width="3.8" height="3.8" fill="#fff" stroke="#8a8a8a" stroke-width="0.9"></rect><polygon points="11.00,5.10 12.56,9.26 16.99,9.45 13.52,12.22 14.70,16.50 11.00,14.05 7.30,16.50 8.48,12.22 5.01,9.45 9.44,9.26" fill="#f2b45a"></polygon></svg>
<svg class="i" style="left:1216px;top:235px;" width="15" height="8" viewBox="0 0 15 8"><path d="M0.5 6.5H14.5" stroke="#e6e6e6" stroke-width="1.6"></path><path d="M0.5 6.5L7.3 0.8L14.2 6.5" fill="#e6e6e6" stroke="#d2d2d2" stroke-width="0.9"></path></svg>
<div class="r" style="left:1px;top:563px;width:1193px;height:1px;background:#bdbdbd;"></div>
<div class="r" style="left:1px;top:564px;width:1193px;height:30px;background:#f1f1f1;"></div>
<div class="r" style="left:1px;top:594px;width:1193px;height:1px;background:#c4c4c4;"></div>
<span class="t " style="font-size: 11.3px; color: rgb(60, 67, 84); -webkit-text-stroke: 0.4px rgb(60, 67, 84); left: 4.2px; top: 573px; transform: scaleX(0.9422);">TIMELINE</span>
<div class="r" style="left:1px;top:595px;width:199px;height:110px;background:#fafafa;"></div>
<div class="r" style="left:201px;top:595px;width:993px;height:110px;background:#fff;"></div>
<div class="r" style="left:200px;top:595px;width:1px;height:110px;background:#c4c4c4;"></div>
<div class="r" style="left:1193px;top:595px;width:1px;height:110px;background:#cfcfcf;"></div>
<div class="r" style="left:201px;top:595px;width:992px;height:24px;background:#fcfcfc;"></div>
<svg class="i" style="left:0;top:0" width="1200" height="729"><path d="M206.5 607.4V619 M211.5 615.2V619 M216.5 615.2V619 M221.5 615.2V619 M226.5 615.2V619 M231.5 611.2V619 M236.5 615.2V619 M241.5 615.2V619 M246.5 615.2V619 M251.5 615.2V619 M256.5 607.4V619 M261.5 615.2V619 M266.5 615.2V619 M271.5 615.2V619 M276.5 615.2V619 M281.5 611.2V619 M286.5 615.2V619 M291.5 615.2V619 M296.5 615.2V619 M301.5 615.2V619 M306.5 607.4V619 M311.5 615.2V619 M316.5 615.2V619 M321.5 615.2V619 M326.5 615.2V619 M331.5 611.2V619 M336.5 615.2V619 M341.5 615.2V619 M346.5 615.2V619 M351.5 615.2V619 M356.5 607.4V619 M361.5 615.2V619 M366.5 615.2V619 M371.5 615.2V619 M376.5 615.2V619 M381.5 611.2V619 M386.5 615.2V619 M391.5 615.2V619 M396.5 615.2V619 M401.5 615.2V619 M406.5 607.4V619 M411.5 615.2V619 M416.5 615.2V619 M421.5 615.2V619 M426.5 615.2V619 M431.5 611.2V619 M436.5 615.2V619 M441.5 615.2V619 M446.5 615.2V619 M451.5 615.2V619 M456.5 607.4V619 M461.5 615.2V619 M466.5 615.2V619 M471.5 615.2V619 M476.5 615.2V619 M481.5 611.2V619 M486.5 615.2V619 M491.5 615.2V619 M496.5 615.2V619 M501.5 615.2V619 M506.5 607.4V619 M511.5 615.2V619 M516.5 615.2V619 M521.5 615.2V619 M526.5 615.2V619 M531.5 611.2V619 M536.5 615.2V619 M541.5 615.2V619 M546.5 615.2V619 M551.5 615.2V619 M556.5 607.4V619 M561.5 615.2V619 M566.5 615.2V619 M571.5 615.2V619 M576.5 615.2V619 M581.5 611.2V619 M586.5 615.2V619 M591.5 615.2V619 M596.5 615.2V619 M601.5 615.2V619 M606.5 607.4V619 M611.5 615.2V619 M616.5 615.2V619 M621.5 615.2V619 M626.5 615.2V619 M631.5 611.2V619 M636.5 615.2V619 M641.5 615.2V619 M646.5 615.2V619 M651.5 615.2V619 M656.5 607.4V619 M661.5 615.2V619 M666.5 615.2V619 M671.5 615.2V619 M676.5 615.2V619 M681.5 611.2V619 M686.5 615.2V619 M691.5 615.2V619 M696.5 615.2V619 M701.5 615.2V619 M706.5 607.4V619 M711.5 615.2V619 M716.5 615.2V619 M721.5 615.2V619 M726.5 615.2V619 M731.5 611.2V619 M736.5 615.2V619 M741.5 615.2V619 M746.5 615.2V619 M751.5 615.2V619 M756.5 607.4V619 M761.5 615.2V619 M766.5 615.2V619 M771.5 615.2V619 M776.5 615.2V619 M781.5 611.2V619 M786.5 615.2V619 M791.5 615.2V619 M796.5 615.2V619 M801.5 615.2V619 M806.5 607.4V619 M811.5 615.2V619 M816.5 615.2V619 M821.5 615.2V619 M826.5 615.2V619 M831.5 611.2V619 M836.5 615.2V619 M841.5 615.2V619 M846.5 615.2V619 M851.5 615.2V619 M856.5 607.4V619 M861.5 615.2V619 M866.5 615.2V619 M871.5 615.2V619 M876.5 615.2V619 M881.5 611.2V619 M886.5 615.2V619 M891.5 615.2V619 M896.5 615.2V619 M901.5 615.2V619 M906.5 607.4V619 M911.5 615.2V619 M916.5 615.2V619 M921.5 615.2V619 M926.5 615.2V619 M931.5 611.2V619 M936.5 615.2V619 M941.5 615.2V619 M946.5 615.2V619 M951.5 615.2V619 M956.5 607.4V619 M961.5 615.2V619 M966.5 615.2V619 M971.5 615.2V619 M976.5 615.2V619 M981.5 611.2V619 M986.5 615.2V619 M991.5 615.2V619 M996.5 615.2V619 M1001.5 615.2V619 M1006.5 607.4V619 M1011.5 615.2V619 M1016.5 615.2V619 M1021.5 615.2V619 M1026.5 615.2V619 M1031.5 611.2V619 M1036.5 615.2V619 M1041.5 615.2V619 M1046.5 615.2V619 M1051.5 615.2V619 M1056.5 607.4V619 M1061.5 615.2V619 M1066.5 615.2V619 M1071.5 615.2V619 M1076.5 615.2V619 M1081.5 611.2V619 M1086.5 615.2V619 M1091.5 615.2V619 M1096.5 615.2V619 M1101.5 615.2V619 M1106.5 607.4V619 M1111.5 615.2V619 M1116.5 615.2V619 M1121.5 615.2V619 M1126.5 615.2V619 M1131.5 611.2V619 M1136.5 615.2V619 M1141.5 615.2V619 M1146.5 615.2V619 M1151.5 615.2V619 M1156.5 607.4V619 M1161.5 615.2V619 M1166.5 615.2V619 M1171.5 615.2V619 M1176.5 615.2V619 M1181.5 611.2V619 M1186.5 615.2V619 M1191.5 615.2V619" stroke="#b8b8b8" stroke-width="1" fill="none"></path></svg>
<span class="t sf" style="font-size: 11.5px; color: rgb(51, 51, 51); left: 205.7px; top: 597px; transform: scaleX(1.0072);">0:00</span>
<span class="t sf" style="font-size: 11.5px; color: rgb(51, 51, 51); left: 245.7px; top: 597px; transform: scaleX(1.0072);">0:01</span>
<span class="t sf" style="font-size: 11.5px; color: rgb(51, 51, 51); left: 295.7px; top: 597px; transform: scaleX(1.0072);">0:02</span>
<span class="t sf" style="font-size: 11.5px; color: rgb(51, 51, 51); left: 345.7px; top: 597px; transform: scaleX(1.0072);">0:03</span>
<span class="t sf" style="font-size: 11.5px; color: rgb(51, 51, 51); left: 395.7px; top: 597px; transform: scaleX(1.0072);">0:04</span>
<span class="t sf" style="font-size: 11.5px; color: rgb(51, 51, 51); left: 445.7px; top: 597px; transform: scaleX(1.0072);">0:05</span>
<span class="t sf" style="font-size: 11.5px; color: rgb(51, 51, 51); left: 495.7px; top: 597px; transform: scaleX(1.0072);">0:06</span>
<span class="t sf" style="font-size: 11.5px; color: rgb(51, 51, 51); left: 545.7px; top: 597px; transform: scaleX(1.0072);">0:07</span>
<span class="t sf" style="font-size: 11.5px; color: rgb(51, 51, 51); left: 595.7px; top: 597px; transform: scaleX(1.0072);">0:08</span>
<span class="t sf" style="font-size: 11.5px; color: rgb(51, 51, 51); left: 645.7px; top: 597px; transform: scaleX(1.0072);">0:09</span>
<span class="t sf" style="font-size: 11.5px; color: rgb(51, 51, 51); left: 695.7px; top: 597px; transform: scaleX(1.0072);">0:10</span>
<span class="t sf" style="font-size: 11.5px; color: rgb(51, 51, 51); left: 745.7px; top: 597px; transform: scaleX(1.0284);">0:11</span>
<span class="t sf" style="font-size: 11.5px; color: rgb(51, 51, 51); left: 795.7px; top: 597px; transform: scaleX(1.0072);">0:12</span>
<span class="t sf" style="font-size: 11.5px; color: rgb(51, 51, 51); left: 845.7px; top: 597px; transform: scaleX(1.0072);">0:13</span>
<span class="t sf" style="font-size: 11.5px; color: rgb(51, 51, 51); left: 895.7px; top: 597px; transform: scaleX(1.0072);">0:14</span>
<span class="t sf" style="font-size: 11.5px; color: rgb(51, 51, 51); left: 945.7px; top: 597px; transform: scaleX(1.0072);">0:15</span>
<span class="t sf" style="font-size: 11.5px; color: rgb(51, 51, 51); left: 995.7px; top: 597px; transform: scaleX(1.0072);">0:16</span>
<span class="t sf" style="font-size: 11.5px; color: rgb(51, 51, 51); left: 1045.7px; top: 597px; transform: scaleX(1.0072);">0:17</span>
<span class="t sf" style="font-size: 11.5px; color: rgb(51, 51, 51); left: 1095.7px; top: 597px; transform: scaleX(1.0072);">0:18</span>
<span class="t sf" style="font-size: 11.5px; color: rgb(51, 51, 51); left: 1145.7px; top: 597px; transform: scaleX(1.0072);">0:19</span>
<div class="r" style="left:1px;top:619px;width:199px;height:1px;background:#c9c9c9;"></div>
<div class="r" style="left:201px;top:619px;width:992px;height:1px;background:#d4d4d4;"></div>
<div class="r" style="left:1px;top:644px;width:199px;height:1px;background:#c9c9c9;"></div>
<div class="r" style="left:201px;top:644px;width:992px;height:1px;background:#e6e6e6;"></div>
<div class="r" style="left:1px;top:666px;width:199px;height:1px;background:#c9c9c9;"></div>
<div class="r" style="left:201px;top:666px;width:992px;height:1px;background:#e6e6e6;"></div>
<div class="r" style="left:1px;top:688px;width:199px;height:1px;background:#c9c9c9;"></div>
<div class="r" style="left:201px;top:688px;width:992px;height:1px;background:#e6e6e6;"></div>
<span class="t sf" style="font-size: 12px; color: rgb(68, 68, 68); left: 20.7px; top: 599.5px; transform: scaleX(1.0012);">Main Timeline</span>
<span class="t sf" style="font-size: 12px; color: rgb(68, 68, 68); left: 20.7px; top: 627.5px; transform: scaleX(1.0174);">Slide</span>
<span class="t sf" style="font-size: 12px; color: rgb(68, 68, 68); left: 20.7px; top: 649.5px; transform: scaleX(1.0033);">Text Placeholder_2</span>
<span class="t sf" style="font-size: 12px; color: rgb(68, 68, 68); left: 20.7px; top: 671.5px; transform: scaleX(0.9969);">Title Placeholder_1</span>
<div class="r" style="left:206px;top:622px;width:151px;height:23px;background:#eef0ff;border:1px solid #7a7a7a"></div>
<div class="r" style="left:356px;top:620px;width:1px;height:85px;background:#cf2a2a;"></div>
<div class="r" style="left:206px;top:644px;width:151px;height:23px;background:#eef0ff;border:1px solid #7a7a7a"></div>
<div class="r" style="left:206px;top:666px;width:151px;height:23px;background:#eef0ff;border:1px solid #7a7a7a"></div>
<div class="r" style="left:230px;top:569.5px;width:1px;height:20px;background:#7c7c7c;"></div>
<div class="r" style="left:306px;top:569.5px;width:1px;height:20px;background:#7c7c7c;"></div>
<div class="r" style="left:355px;top:569.5px;width:1px;height:20px;background:#7c7c7c;"></div>
<div class="r" style="left:444px;top:569.5px;width:1px;height:20px;background:#7c7c7c;"></div>
<div class="r" style="left:587px;top:569.5px;width:1px;height:20px;background:#7c7c7c;"></div>
<div class="r" style="left:839px;top:569.5px;width:1px;height:20px;background:#7c7c7c;"></div>
<div class="r" style="left:874px;top:569.5px;width:1px;height:20px;background:#7c7c7c;"></div>
<div class="r" style="left:909px;top:569.5px;width:1px;height:20px;background:#7c7c7c;"></div>
<div class="r" style="left:210px;top:576px;width:11px;height:10.5px;background:#c2c2c2;"></div>
<div class="r" style="left:205px;top:571px;width:11px;height:11px;background:#1c6fb6;"></div>
<svg class="i" style="left:244.5px;top:573px;" width="11" height="13" viewBox="0 0 11 13"><path d="M0 0L11 6.5L0 13Z" fill="#3fae49"></path></svg>
<svg class="i" style="left:266.75px;top:577.8px;" width="5.5" height="3.2" viewBox="0 0 5.5 3.2"><path d="M0 0H5.5L2.75 3.2Z" fill="#111"></path></svg>
<div class="r" style="left:283px;top:573px;width:12px;height:12px;background:#1c6fb6;"></div>
<svg class="i" style="left:318px;top:571.2px;" width="16" height="16" viewBox="0 0 16 16"><circle cx="7.75" cy="7.8" r="7.75" fill="#e01b24"></circle><rect x="6" y="2.3" width="3.5" height="7.2" rx="1.7" fill="#fff"></rect><path d="M4.4 11.6H11.1" stroke="#fff" stroke-width="1.6"></path><path d="M7.75 9.5V11" stroke="#fff" stroke-width="1.2"></path></svg>
<svg class="i" style="left:342.65px;top:577.8px;" width="5.5" height="3.2" viewBox="0 0 5.5 3.2"><path d="M0 0H5.5L2.75 3.2Z" fill="#111"></path></svg>
<svg class="i" style="left:364.4px;top:571px;" width="16" height="16" viewBox="0 0 16 16"><circle cx="6" cy="6" r="4.9" fill="#f6f6f6" stroke="#808080" stroke-width="1.5"></circle><path d="M9.9 9.9L15 14.6" stroke="#787878" stroke-width="2.7" stroke-linecap="round"></path><path d="M3.8 5.4V3.8H5.6M8.2 6.6V8.2H6.4" fill="none" stroke="#2a9a9a" stroke-width="1.1"></path></svg>
<svg class="i" style="left:391.6px;top:571px;" width="16" height="16" viewBox="0 0 16 16"><circle cx="6" cy="6" r="4.9" fill="#f6f6f6" stroke="#808080" stroke-width="1.5"></circle><path d="M9.9 9.9L15 14.6" stroke="#787878" stroke-width="2.7" stroke-linecap="round"></path><path d="M3.6 6H8.4" stroke="#2a9a9a" stroke-width="1.2"></path></svg>
<svg class="i" style="left:418.4px;top:571px;" width="16" height="16" viewBox="0 0 16 16"><circle cx="6" cy="6" r="4.9" fill="#f6f6f6" stroke="#808080" stroke-width="1.5"></circle><path d="M9.9 9.9L15 14.6" stroke="#787878" stroke-width="2.7" stroke-linecap="round"></path><path d="M3.6 6H8.4M6 3.6V8.4" stroke="#2a9a9a" stroke-width="1.2"></path></svg>
<svg class="i" style="left:454px;top:571px;" width="16" height="16" viewBox="0 0 16 16"><rect x="0" y="0" width="5.5" height="6.5" fill="#bebebe"></rect><rect x="13.2" y="0" width="2.6" height="6.5" fill="#b0b0b0"></rect><path d="M9.5 1V7" stroke="#808080" stroke-width="1"></path><path d="M7.6 5.6L9.5 8L11.4 5.6Z" fill="#808080"></path><rect x="5.8" y="9.3" width="7.4" height="6.6" fill="#808080"></rect></svg>
<svg class="i" style="left:481px;top:571px;" width="16" height="16" viewBox="0 0 16 16"><rect x="0" y="0" width="16" height="6.5" fill="#bebebe"></rect><rect x="5.5" y="0" width="7" height="6.5" fill="#adadad"></rect><path d="M9.3 1.5V7" stroke="#808080" stroke-width="1"></path><path d="M7.4 5.6L9.3 8L11.2 5.6Z" fill="#808080"></path><rect x="5.8" y="9.3" width="7.2" height="6.6" fill="#808080"></rect></svg>
<svg class="i" style="left:508px;top:571px;" width="16" height="16" viewBox="0 0 16 16"><rect x="0" y="0" width="6" height="6" fill="#808080"></rect><path d="M6.3 6.5V15.5" stroke="#808080" stroke-width="1" stroke-dasharray="1 1"></path><path d="M8.6 7.3H15.6M9.4 7.5V15.2H14.8V7.5M11 5.8H13.2" fill="none" stroke="#a4a4a4" stroke-width="1.1"></path><path d="M11.2 9V13.8M13 9V13.8" stroke="#a4a4a4" stroke-width="0.9"></path></svg>
<svg class="i" style="left:535px;top:571px;" width="16" height="16" viewBox="0 0 16 16"><path d="M3.5 0V12.5H16M0 3.5H12.5V16" fill="none" stroke="#767676" stroke-width="1.5"></path><rect x="5.5" y="5.5" width="6" height="6" fill="#949494"></rect></svg>
<svg class="i" style="left:562px;top:571px;" width="16" height="16" viewBox="0 0 16 16"><rect x="3.2" y="0" width="7" height="6.5" fill="#808080"></rect><rect x="0" y="9.3" width="1.4" height="6.6" fill="#b0b0b0"></rect><rect x="2" y="9.3" width="2.2" height="6.6" fill="#bebebe"></rect><rect x="11" y="9.3" width="5" height="6.6" fill="#bebebe"></rect><path d="M7.4 9V13.5" stroke="#808080" stroke-width="1"></path><path d="M5.6 12.2L7.4 14.6L9.2 12.2Z" fill="#808080"></path></svg>
<svg class="i" style="left:596.8px;top:571px;" width="16.5" height="16" viewBox="0 0 16.5 16"><g transform="translate(0.2 0)"><rect x="0" y="3.1" width="5.4" height="2.6" fill="#7c7c7c"></rect><rect x="1.2" y="3.9000000000000004" width="1.1" height="1" fill="#f1f1f1"></rect><rect x="3.2" y="3.9000000000000004" width="1.1" height="1" fill="#f1f1f1"></rect><rect x="0" y="10.5" width="5.4" height="2.6" fill="#7c7c7c"></rect><rect x="1.2" y="11.3" width="1.1" height="1" fill="#f1f1f1"></rect><rect x="3.2" y="11.3" width="1.1" height="1" fill="#f1f1f1"></rect><rect x="1.2" y="5.7" width="1.5" height="4.8" fill="#7c7c7c"></rect></g><g transform="translate(10.4 0)"><rect x="0" y="3.1" width="5.4" height="2.6" fill="#7c7c7c"></rect><rect x="1.2" y="3.9000000000000004" width="1.1" height="1" fill="#f1f1f1"></rect><rect x="3.2" y="3.9000000000000004" width="1.1" height="1" fill="#f1f1f1"></rect><rect x="0" y="10.5" width="5.4" height="2.6" fill="#7c7c7c"></rect><rect x="1.2" y="11.3" width="1.1" height="1" fill="#f1f1f1"></rect><rect x="3.2" y="11.3" width="1.1" height="1" fill="#f1f1f1"></rect><rect x="3.2" y="5.7" width="1.5" height="4.8" fill="#7c7c7c"></rect></g><path d="M7.7 4.8V12" stroke="#7c7c7c" stroke-width="1.1" stroke-dasharray="1 1"></path><path d="M7.7 0L9.2 1.6L7.7 3.2L6.2 1.6ZM7.7 13L9.2 14.6L7.7 16.2L6.2 14.6Z" fill="#7c7c7c"></path></svg>
<svg class="i" style="left:623.8px;top:571px;" width="16.5" height="16" viewBox="0 0 16.5 16"><g transform="translate(0.2 0)"><rect x="0" y="3.1" width="5.4" height="2.6" fill="#7c7c7c"></rect><rect x="1.2" y="3.9000000000000004" width="1.1" height="1" fill="#f1f1f1"></rect><rect x="3.2" y="3.9000000000000004" width="1.1" height="1" fill="#f1f1f1"></rect><rect x="0" y="10.5" width="5.4" height="2.6" fill="#7c7c7c"></rect><rect x="1.2" y="11.3" width="1.1" height="1" fill="#f1f1f1"></rect><rect x="3.2" y="11.3" width="1.1" height="1" fill="#f1f1f1"></rect><rect x="1.2" y="5.7" width="1.5" height="4.8" fill="#7c7c7c"></rect></g><g transform="translate(10.4 0)"><rect x="0" y="3.1" width="5.4" height="2.6" fill="#7c7c7c"></rect><rect x="1.2" y="3.9000000000000004" width="1.1" height="1" fill="#f1f1f1"></rect><rect x="3.2" y="3.9000000000000004" width="1.1" height="1" fill="#f1f1f1"></rect><rect x="0" y="10.5" width="5.4" height="2.6" fill="#7c7c7c"></rect><rect x="1.2" y="11.3" width="1.1" height="1" fill="#f1f1f1"></rect><rect x="3.2" y="11.3" width="1.1" height="1" fill="#f1f1f1"></rect><rect x="3.2" y="5.7" width="1.5" height="4.8" fill="#7c7c7c"></rect></g><path d="M5.8 8.1H8" stroke="#7c7c7c" stroke-width="1.3"></path><path d="M7.2 5.9L9.9 8.1L7.2 10.3Z" fill="#7c7c7c"></path></svg>
<svg class="i" style="left:651px;top:571px;" width="16.5" height="16" viewBox="0 0 16.5 16"><path d="M12.4 0.1L14 1.7L12.4 3.3L10.8 1.7Z" fill="#7a7a7a"></path><path d="M6.6 5.6L9.8 4.2L12.6 6.6L15.4 5M10 4.4L7.6 9.8L10.6 11.6L9.8 15.6M7.6 9.8L5.4 10.6H1" fill="none" stroke="#7a7a7a" stroke-width="2.1" stroke-linejoin="round" stroke-linecap="butt"></path><path d="M0 6.4H2.8M0 15.3H6.6" stroke="#7a7a7a" stroke-width="1.1"></path></svg>
<svg class="i" style="left:681px;top:571.2px;" width="11.5" height="15.2" viewBox="0 0 11.5 15.2"><path d="M5.7 0Q11.3 7.5 11.3 10Q11.3 15 5.7 15Q0.2 15 0.2 10Q0.2 7.5 5.7 0Z" fill="#b6b6b6"></path></svg>
<svg class="i" style="left:706.5px;top:572px;" width="16.5" height="14" viewBox="0 0 16.5 14"><rect x="0.2" y="4.2" width="2" height="5.8" fill="#8a8a8a"></rect><path d="M3.2 4.4L8.6 0.2V13.8L3.2 9.8Z" fill="#8a8a8a"></path><path d="M10.2 4.4Q12.2 7 10.2 9.6" fill="none" stroke="#8a8a8a" stroke-width="1.5"></path><path d="M11 1.2Q16.4 7 11 12.8" fill="none" stroke="#8a8a8a" stroke-width="1.6"></path></svg>
<svg class="i" style="left:732.1px;top:577.8000000000001px;" width="5" height="2.6" viewBox="0 0 5 2.6"><path d="M0 0H5L2.5 2.6Z" fill="#7a7a7a"></path></svg>
<svg class="i" style="left:746px;top:571px;" width="16" height="16" viewBox="0 0 16 16"><rect x="0.6" y="0.6" width="14.8" height="14.8" fill="#fff" stroke="#808080" stroke-width="1.2"></rect><path d="M2.6 13.4H13.4V3.6Z" fill="#8a8a8a"></path></svg>
<svg class="i" style="left:773px;top:571px;" width="16" height="16" viewBox="0 0 16 16"><rect x="0.6" y="0.6" width="14.8" height="14.8" fill="#fff" stroke="#808080" stroke-width="1.2"></rect><path d="M13.4 13.4H2.6V3.6Z" fill="#8a8a8a"></path></svg>
<svg class="i" style="left:802.5px;top:571px;" width="15" height="15.5" viewBox="0 0 15 15.5"><rect x="0.5" y="11.5" width="1.9" height="4" fill="#8a8a8a"></rect><rect x="3.5" y="8.5" width="1.9" height="7" fill="#8a8a8a"></rect><rect x="6.5" y="5.0" width="1.9" height="10.5" fill="#8a8a8a"></rect><rect x="9.5" y="0.0" width="1.9" height="15.5" fill="#8a8a8a"></rect><rect x="12.5" y="6.5" width="1.9" height="9" fill="#8a8a8a"></rect></svg>
<svg class="i" style="left:827.1px;top:577.8000000000001px;" width="5" height="2.6" viewBox="0 0 5 2.6"><path d="M0 0H5L2.5 2.6Z" fill="#7a7a7a"></path></svg>
<div class="r" style="left:848.7px;top:573px;width:16.6px;height:12px;background:#3fae49;"></div>
<span class="t b" style="font-size: 10.5px; color: rgb(255, 255, 255); left: 850.3px; top: 574px; transform: scaleX(0.87);">CC</span>
<svg class="i" style="left:883.7px;top:571px;" width="16.5" height="16" viewBox="0 0 16.5 16"><rect x="0.5" y="2.5" width="6" height="2.4" fill="none" stroke="#8a8a8a" stroke-width="0.9"></rect><rect x="10" y="2.5" width="6" height="2.4" fill="none" stroke="#8a8a8a" stroke-width="0.9"></rect><rect x="0.5" y="6.8" width="6" height="2.4" fill="none" stroke="#8a8a8a" stroke-width="0.9"></rect><rect x="10" y="6.8" width="6" height="2.4" fill="none" stroke="#8a8a8a" stroke-width="0.9"></rect><rect x="0.5" y="11.1" width="6" height="2.4" fill="none" stroke="#8a8a8a" stroke-width="0.9"></rect><rect x="10" y="11.1" width="6" height="2.4" fill="none" stroke="#8a8a8a" stroke-width="0.9"></rect><path d="M8.2 1.5V14.5" stroke="#808080" stroke-width="1" stroke-dasharray="1 1"></path><path d="M6.8 2.2L8.2 0.2L9.6 2.2ZM6.8 13.8L8.2 15.8L9.6 13.8Z" fill="#808080"></path></svg>
<svg class="i" style="left:919px;top:571px;" width="16" height="16" viewBox="0 0 16 16"><path d="M5.5 3.6Q14.6 3 14 9.5Q13.4 13.4 9.5 14.2" fill="none" stroke="#7c7c7c" stroke-width="1.5"></path><path d="M7.4 0.4L4 3.8L7.8 6.6" fill="none" stroke="#7c7c7c" stroke-width="1.5"></path><path d="M4.2 7.4L8.4 11.6L4.2 15.8L0 11.6Z" fill="#b6b6b6"></path></svg>
<svg class="i" style="left:947.8px;top:573.7px;" width="11.4" height="11.4" viewBox="0 0 11.4 11.4"><path d="M5.7 0L11.4 5.7L5.7 11.4L0 5.7Z" fill="#b6b6b6"></path></svg>
<svg class="i" style="left:973.5px;top:571px;" width="16" height="16" viewBox="0 0 16 16"><path d="M9.5 3.6Q0.4 3 1 9.5Q1.6 13.4 5.5 14.2" fill="none" stroke="#7c7c7c" stroke-width="1.5"></path><path d="M7.6 0.4L11 3.8L7.2 6.6" fill="none" stroke="#7c7c7c" stroke-width="1.5"></path><path d="M11.4 7.4L15.6 11.6L11.4 15.8L7.2 11.6Z" fill="#b6b6b6"></path></svg>
<svg class="i" style="left:1002.8px;top:569.3px;" width="8.4" height="4.6" viewBox="0 0 8.4 4.6"><path d="M0.4 0.3L2.8 2.3L0.4 4.3M4.6 0.3L7 2.3L4.6 4.3" fill="none" stroke="#4a4a9a" stroke-width="1"></path></svg>
<svg class="i" style="left:1151px;top:575.2px;" width="10.5" height="7" viewBox="0 0 10.5 7"><path d="M0 3.4H3.4" stroke="#222" stroke-width="1.1"></path><path d="M3.6 0V7" stroke="#222" stroke-width="1.2"></path><path d="M4 1.2H9.8V5.2H4" fill="none" stroke="#222" stroke-width="1.1"></path><path d="M4 4.9H9.8" stroke="#222" stroke-width="1.8"></path></svg>
<svg class="i" style="left:1174.5px;top:575px;" width="8.5" height="8.5" viewBox="0 0 8.5 8.5"><path d="M0.3 0.3L8.2 8.2M8.2 0.3L0.3 8.2" stroke="#333" stroke-width="1.2"></path></svg>
<svg class="i" style="left:124.2px;top:604.2px;" width="9.8" height="6" viewBox="0 0 9.8 6"><path d="M0 0H9.8L4.9 6Z" fill="#7a7a7a"></path></svg>
<div class="r" style="left:141px;top:598.5px;width:1px;height:15px;background:#d4d4d4;"></div>
<svg class="i" style="left:157.8px;top:602.6px;" width="15" height="9" viewBox="0 0 15 9"><path d="M0 4.5Q7.3 -3 14.6 4.5Q7.3 12 0 4.5Z" fill="#787878"></path><circle cx="7.3" cy="4.4" r="2.5" fill="#ececec"></circle><circle cx="7.3" cy="4.4" r="1.5" fill="#787878"></circle></svg>
<svg class="i" style="left:183.6px;top:601.2px;" width="12.5" height="11.5" viewBox="0 0 12.5 11.5"><path d="M3.2 5V3.2Q3.2 0.7 5.6 0.7Q8 0.7 8 3.2V5" fill="none" stroke="#808080" stroke-width="1.5"></path><rect x="0.8" y="4.6" width="9.2" height="6.6" fill="#808080"></rect><rect x="4.4" y="6.4" width="1.8" height="3" fill="#fafafa"></rect><rect x="10" y="3" width="1.6" height="7" fill="#d0d0d0"></rect></svg>
<svg class="i" style="left:157.8px;top:651px;" width="15" height="9" viewBox="0 0 15 9"><path d="M0 4.5Q7.3 -3 14.6 4.5Q7.3 12 0 4.5Z" fill="#787878"></path><circle cx="7.3" cy="4.4" r="2.5" fill="#ececec"></circle><circle cx="7.3" cy="4.4" r="1.5" fill="#787878"></circle></svg>
<svg class="i" style="left:183.6px;top:650px;" width="12.5" height="11.5" viewBox="0 0 12.5 11.5"><path d="M6.8 4.2V2.6Q6.8 0.6 9.2 0.6Q11.6 0.6 11.6 2.6V3.4" fill="none" stroke="#808080" stroke-width="1.4"></path><rect x="0.6" y="3.6" width="8" height="5.8" fill="#808080"></rect><rect x="3.6" y="5.2" width="1.8" height="2.6" fill="#fafafa"></rect></svg>
<svg class="i" style="left:157.8px;top:673px;" width="15" height="9" viewBox="0 0 15 9"><path d="M0 4.5Q7.3 -3 14.6 4.5Q7.3 12 0 4.5Z" fill="#787878"></path><circle cx="7.3" cy="4.4" r="2.5" fill="#ececec"></circle><circle cx="7.3" cy="4.4" r="1.5" fill="#787878"></circle></svg>
<svg class="i" style="left:183.6px;top:672px;" width="12.5" height="11.5" viewBox="0 0 12.5 11.5"><path d="M6.8 4.2V2.6Q6.8 0.6 9.2 0.6Q11.6 0.6 11.6 2.6V3.4" fill="none" stroke="#808080" stroke-width="1.4"></path><rect x="0.6" y="3.6" width="8" height="5.8" fill="#808080"></rect><rect x="3.6" y="5.2" width="1.8" height="2.6" fill="#fafafa"></rect></svg>
<div class="r" style="left:1px;top:704px;width:1517px;height:1px;background:#d8eefb;"></div>
<div class="r" style="left:0px;top:705px;width:1519px;height:24px;background:#0b6fba;"></div>
<div class="r" style="left:0px;top:705px;width:1519px;height:1px;background:#1a649e;"></div>
<span class="t " style="font-size: 12px; color: rgb(255, 255, 255); left: 6.2px; top: 710.5px; transform: scaleX(0.9254);">Ready</span>
<span class="t " style="font-size: 12px; color: rgb(255, 255, 255); left: 1422.7px; top: 711.4px; transform: scaleX(0.9404);">45%</span>
<div class="r" style="left:1261px;top:716.7px;width:8px;height:2.2px;background:#fff;"></div>
<div class="r" style="left:1275px;top:717px;width:119px;height:1px;background:#fff;"></div>
<div class="r" style="left:1294.6px;top:710.8px;width:4.8px;height:13px;background:#fff;"></div>
<div class="r" style="left:1334px;top:715.2px;width:1px;height:4.8px;background:#fff;"></div>
<div class="r" style="left:1399.7px;top:716.8px;width:8.6px;height:2.2px;background:#fff;"></div>
<div class="r" style="left:1402.9px;top:713.4px;width:2.2px;height:9px;background:#fff;"></div>
<svg class="i" style="left:1463.5px;top:709px;" width="17" height="16" viewBox="0 0 17 16"><rect x="0.5" y="0.5" width="16" height="15" fill="none" stroke="#fff" stroke-width="1"></rect><path d="M8.5 2.6L10.6 4.8H6.4ZM8.5 13.4L10.6 11.2H6.4ZM2.9 8L5.1 5.9V10.1ZM14.1 8L11.9 5.9V10.1Z" fill="#fff"></path><circle cx="8.5" cy="8" r="2.5" fill="none" stroke="#cfe3f3" stroke-width="0.8"></circle></svg>
<div class="r" style="left:0px;top:0px;width:1px;height:729px;background:#16649f;"></div>
<div class="r" style="left:1518px;top:0px;width:1px;height:729px;background:#16649f;"></div>
</body></html>
